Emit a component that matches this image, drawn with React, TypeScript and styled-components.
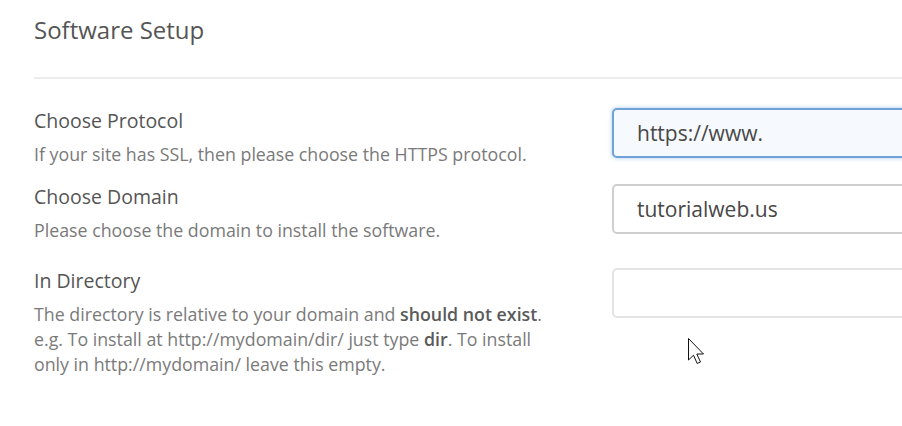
import React from "react";
import styled, { createGlobalStyle } from "styled-components";

const Global = createGlobalStyle`
  html, body {
    margin: 0;
    padding: 0;
    background: #ffffff;
    overflow: hidden;
  }
  body {
    font-family: "Open Sans", "Noto Sans", Arial, sans-serif;
    color: #555;
  }
`;

const Page = styled.div`
  position: relative;
  width: 902px;
  height: 426px;
  padding: 0 0 0 34px;
  box-sizing: border-box;
  overflow: hidden;
`;

const Title = styled.h2`
  margin: 0;
  padding-top: 15px;
  font-size: 24px;
  line-height: 30px;
  font-weight: 400;
  color: #555555;
  white-space: nowrap;
`;

const Divider = styled.div`
  margin-top: 32px;
  height: 2px;
  background: #ececec;
  margin-right: -40px;
`;

const Form = styled.div`
  display: flex;
  flex-direction: column;
  padding-top: 29px;
`;

const Row = styled.div<{ $after: number }>`
  display: flex;
  align-items: flex-start;
  margin-bottom: ${(p) => p.$after}px;
`;

const Info = styled.div`
  width: 578px;
  flex: none;
`;

const Label = styled.div`
  font-size: 19.5px;
  line-height: 26px;
  color: #555555;
  margin-bottom: 8px;
  white-space: nowrap;
`;

const Desc = styled.div`
  font-size: 17.8px;
  line-height: 25px;
  color: #7a7a7a;
  white-space: nowrap;

  b {
    font-weight: 600;
    color: #5a5a5a;
  }
`;

const Field = styled.div<{ $variant: "focus" | "normal" | "light" }>`
  flex: none;
  width: 340px;
  height: 50px;
  box-sizing: border-box;
  border-radius: 5px;
  border: 2px solid
    ${(p) =>
      p.$variant === "focus" ? "#6fa3d8" : p.$variant === "normal" ? "#cfcfcf" : "#e4e4e4"};
  background: ${(p) => (p.$variant === "focus" ? "#f6f9fd" : "#ffffff")};
  box-shadow: ${(p) =>
    p.$variant === "focus" ? "0 0 4px rgba(102, 160, 220, 0.55)" : "none"};
  display: flex;
  align-items: center;
  padding-left: 23px;
  font-size: 21px;
  color: #474747;
  white-space: nowrap;
`;

const Cursor = styled.svg`
  position: absolute;
  left: 688px;
  top: 338px;
`;

export default function App() {
  return (
    <>
      <Global />
      <Page>
        <Title>Software Setup</Title>
        <Divider />
        <Form>
          <Row $after={17}>
            <Info>
              <Label>Choose Protocol</Label>
              <Desc>If your site has SSL, then please choose the HTTPS protocol.</Desc>
            </Info>
            <Field $variant="focus">https://www.</Field>
          </Row>
          <Row $after={25}>
            <Info>
              <Label>Choose Domain</Label>
              <Desc>Please choose the domain to install the software.</Desc>
            </Info>
            <Field $variant="normal">tutorialweb.us</Field>
          </Row>
          <Row $after={0}>
            <Info>
              <Label>In Directory</Label>
              <Desc>
                The directory is relative to your domain and <b>should not exist</b>.
                <br />
                e.g. To install at http://mydomain/dir/ just type <b>dir</b>. To install
                <br />
                only in http://mydomain/ leave this empty.
              </Desc>
            </Info>
            <Field $variant="light"></Field>
          </Row>
        </Form>
        <Cursor width="20" height="30" viewBox="0 0 20 30">
          <path
            d="M0.5 0.5 L0.5 22 L5.5 17.2 L9.2 25.5 L12.5 24 L8.8 16 L15.5 16 Z"
            fill="#ffffff"
            stroke="#111"
            strokeWidth="1"
            strokeLinejoin="miter"
          />
        </Cursor>
      </Page>
    </>
  );
}
